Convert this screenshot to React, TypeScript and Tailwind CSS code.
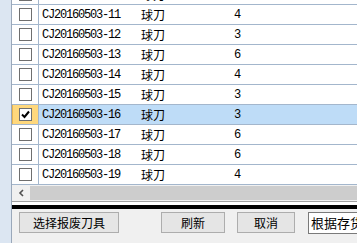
const rows = [
  { code: 'CJ20160503-10', name: '球刀', qty: '4', checked: false },
  { code: 'CJ20160503-11', name: '球刀', qty: '4', checked: false },
  { code: 'CJ20160503-12', name: '球刀', qty: '3', checked: false },
  { code: 'CJ20160503-13', name: '球刀', qty: '6', checked: false },
  { code: 'CJ20160503-14', name: '球刀', qty: '4', checked: false },
  { code: 'CJ20160503-15', name: '球刀', qty: '3', checked: false },
  { code: 'CJ20160503-16', name: '球刀', qty: '3', checked: true },
  { code: 'CJ20160503-17', name: '球刀', qty: '6', checked: false },
  { code: 'CJ20160503-18', name: '球刀', qty: '6', checked: false },
  { code: 'CJ20160503-19', name: '球刀', qty: '4', checked: false },
];

const mono = { fontFamily: '"Liberation Mono", monospace' };

function CheckBox({ checked }: { checked: boolean }) {
  return (
    <div className="w-[13px] h-[13px] border border-[#6f6f6f] bg-white flex items-center justify-center">
      {checked && (
        <svg width="9" height="9" viewBox="0 0 9 9">
          <path d="M1 4.5 L3.5 7 L8 1.5" fill="none" stroke="#000" strokeWidth="2" />
        </svg>
      )}
    </div>
  );
}

export default function App() {
  return (
    <div className="w-[357px] h-[243px] flex bg-[#f0f0f0] overflow-hidden text-black" style={{ fontFamily: '"Noto Sans CJK SC", sans-serif' }}>
      {/* left row-header strip */}
      <div className="w-[12px] shrink-0 bg-[#dce6f2] border-r border-[#9aa8ba]" />

      <div className="flex-1 flex flex-col min-w-0">
        {/* grid */}
        <div className="h-[185px] overflow-hidden bg-white">
          <div className="-mt-[15px] flex flex-col">
            {rows.map((r) => (
              <div
                key={r.code}
                className={`h-[20px] flex border-b border-[#a3b6cc] ${r.checked ? 'bg-[#bedcf7]' : 'bg-white'}`}
              >
                <div
                  className={`w-[27px] shrink-0 flex items-center justify-center border-r border-[#a3b6cc] ${
                    r.checked ? 'bg-[#ffd87c] border-l border-l-[#e6b452]' : 'bg-white'
                  }`}
                >
                  <CheckBox checked={r.checked} />
                </div>
                <div className="w-[102px] shrink-0 pl-[3px] flex items-center text-[12px] tracking-[-1.2px]" style={mono}>
                  {r.code}
                </div>
                <div className="w-[90px] shrink-0 flex items-center text-[12px]">{r.name}</div>
                <div className="flex-1 pl-[3px] flex items-center text-[12px] tracking-[-1.2px]" style={mono}>
                  {r.qty}
                </div>
              </div>
            ))}
          </div>
        </div>

        {/* horizontal scrollbar */}
        <div className="h-[17px] flex bg-[#f0f0f0] border-b border-[#a0a0a0]">
          <div className="w-[18px] shrink-0 flex items-center justify-center">
            <svg width="7" height="8" viewBox="0 0 7 8">
              <path d="M5 1 L2 4 L5 7" fill="none" stroke="#505050" strokeWidth="1.6" />
            </svg>
          </div>
          <div className="flex-1 bg-[#cdcdcd] my-[1px]" />
        </div>
        <div className="h-[3px] bg-white" />

        {/* splitter */}
        <div className="h-[4px] bg-black" />

        {/* toolbar */}
        <div className="flex-1 flex items-start pt-[3px] pl-[7px] text-[12px] overflow-hidden">
          <button className="shrink-0 w-[100px] h-[21px] border border-[#adadad] bg-[#e5e5e5] flex items-center justify-center">
            选择报废刀具
          </button>
          <button className="shrink-0 ml-[42px] w-[64px] h-[21px] border border-[#adadad] bg-[#e5e5e5] flex items-center justify-center">
            刷新
          </button>
          <button className="shrink-0 ml-[12px] w-[58px] h-[21px] border border-[#adadad] bg-[#e5e5e5] flex items-center justify-center">
            取消
          </button>
          <div className="shrink-0 ml-[13px] w-[80px] h-[22px] border border-[#7a7a7a] bg-white flex items-center pl-[2px] whitespace-nowrap overflow-hidden text-[13px]">
            根据存货
          </div>
        </div>
      </div>
    </div>
  );
}
